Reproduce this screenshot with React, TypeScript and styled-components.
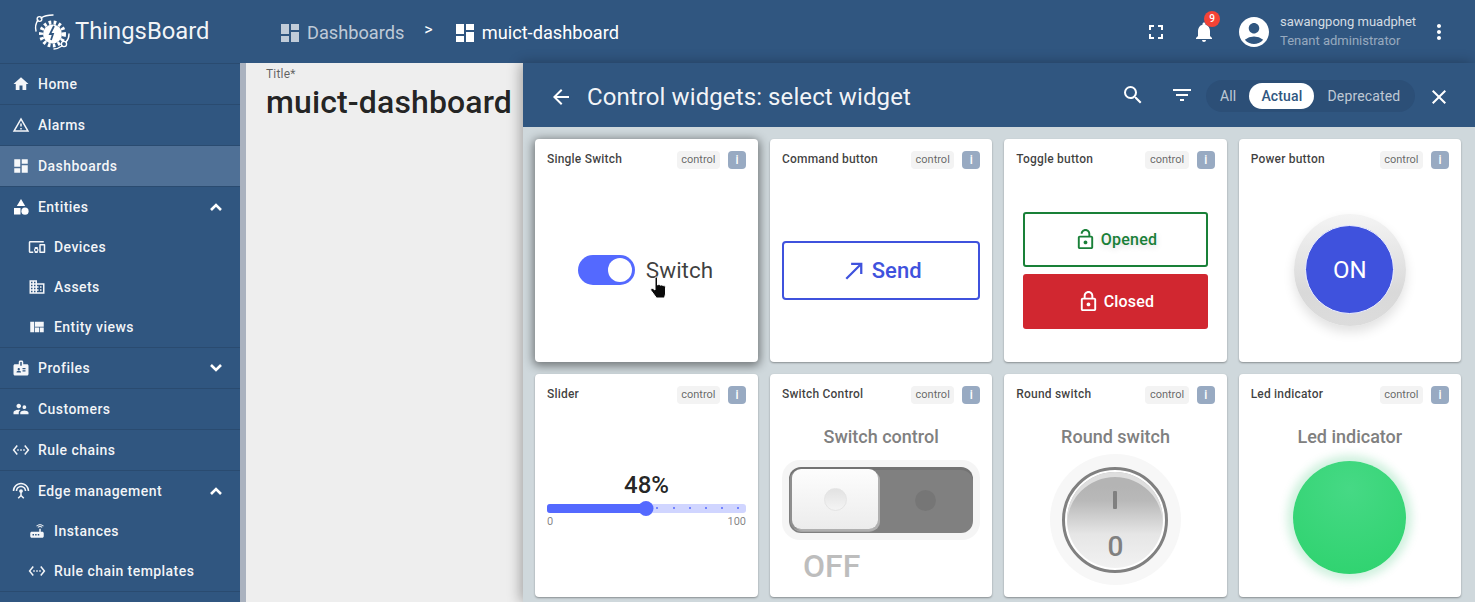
import React from "react";
import styled, { createGlobalStyle } from "styled-components";
import {
  MdHome, MdOutlineWarningAmber, MdDashboard, MdOutlineDevicesOther,
  MdOutlineDomain, MdViewQuilt, MdBadge, MdSupervisorAccount, MdSettingsEthernet, MdSettingsInputAntenna,
  MdRouter, MdFullscreen, MdNotifications, MdAccountCircle, MdMoreVert, MdSearch, MdFilterList, MdClose,
  MdArrowBack, MdNorthEast, MdOutlineLockOpen, MdOutlineLock,
} from "react-icons/md";

const Global = createGlobalStyle`
  html, body { margin: 0; padding: 0; height: 602px; overflow: hidden; }
  body { font-family: Roboto, "Liberation Sans", sans-serif; }
  * { box-sizing: border-box; }
`;

const Page = styled.div`display: flex; width: 1475px; height: 602px; overflow: hidden; background: #305680;`;
const Sidebar = styled.aside`width: 240px; flex: none; background: #305680; color: #fff; display: flex; flex-direction: column; overflow: hidden;`;
const Brand = styled.div`
  height: 64px; flex: none; display: flex; align-items: center; padding-left: 33px; gap: 2px;
  border-bottom: 1px solid rgba(0,0,0,.12);
`;
const BrandName = styled.span`font-size: 23.8px; font-weight: 400; color: rgba(255,255,255,.95); margin-top: -1px;`;
const Nav = styled.nav`display: flex; flex-direction: column;`;
const NavItem = styled.div<{ $active?: boolean; $sub?: boolean }>`
  height: 40px; flex: none; display: flex; align-items: center;
  padding-left: ${p => (p.$sub ? "28px" : "12px")};
  background: ${p => (p.$active ? "#4f7096" : "transparent")};
  font-size: 14px; font-weight: 500; letter-spacing: .45px; color: rgba(255,255,255,.95);
  svg { flex: none; }
`;
const NavGroup = styled.div`display: flex; flex-direction: column; border-bottom: 1px solid rgba(0,0,0,.12);`;
const NavIconBox = styled.span`width: 18px; height: 18px; margin-right: 8px; display: flex; align-items: center; justify-content: center; font-size: 18px;`;
const NavLabel = styled.span`flex: 1;`;
const Chevron = styled.svg<{ $up?: boolean }>`
  width: 14px; height: 10px; margin-right: 17px;
  transform: ${p => (p.$up ? "none" : "rotate(180deg)")};
`;

const Column = styled.div`flex: 1; min-width: 0; display: flex; flex-direction: column;`;
const Topbar = styled.header`height: 63px; flex: none; background: #305680; color: #fff; display: flex; align-items: center; padding-left: 38px;`;
const Crumb = styled.div<{ $dim?: boolean }>`
  display: flex; align-items: center; gap: 5px; font-size: 18.2px; height: 24px; margin-top: 2px;
  color: ${p => (p.$dim ? "rgba(255,255,255,.7)" : "#fff")};
`;
const Separator = styled.span`font-size: 16px; margin: -4px 20px 0 20px; color: #fff;`;
const Spacer = styled.div`flex: 1;`;
const TopIcon = styled.span<{ $gap?: number; $end?: number; $size?: number }>`
  width: ${p => p.$size ?? 24}px; height: 24px; font-size: ${p => p.$size ?? 24}px;
  margin-left: ${p => p.$gap ?? 0}px; margin-right: ${p => p.$end ?? 0}px;
  display: flex; align-items: center; justify-content: center; color: #fff; position: relative;
`;
const Badge = styled.span`
  position: absolute; top: -9px; left: 12px; width: 16px; height: 16px; border-radius: 50%; background: #f44336;
  color: #fff; font-size: 10px; font-weight: 500; display: flex; align-items: center; justify-content: center;
`;
const User = styled.div`display: flex; flex-direction: column; gap: 3px; font-size: 13px; line-height: 16px; margin: 0 12px 0 8px; width: 135px;`;
const UserName = styled.span`color: rgba(255,255,255,.8); white-space: nowrap;`;
const UserRole = styled.span`color: rgba(255,255,255,.5); white-space: nowrap;`;

const Content = styled.div`flex: 1; display: flex; min-height: 0;`;
const Strip = styled.div`width: 6px; flex: none; background: #aab2bf;`;
const TitlePanel = styled.div`width: 277px; flex: none; background: #eeeeee; padding: 4px 0 0 20px;`;
const TitleLabel = styled.div`font-size: 12px; line-height: 14px; color: rgba(0,0,0,.6); letter-spacing: .2px;`;
const TitleValue = styled.div`font-size: 32px; line-height: 36px; margin-top: 3px; font-weight: 500; letter-spacing: .13px; color: rgba(0,0,0,.87); white-space: nowrap;`;

const Drawer = styled.section`flex: 1; min-width: 0; display: flex; flex-direction: column; background: #cfd8dc; box-shadow: -3px 0 12px rgba(0,0,0,.3); position: relative;`;
const DrawerHead = styled.div`height: 64px; flex: none; background: #305680; color: #fff; display: flex; align-items: center; padding: 4px 24px 0 26px;`;
const HeadIcon = styled.span<{ $lift?: boolean; $end?: number }>`
  width: 24px; height: 24px; font-size: 24px; display: flex; align-items: center; justify-content: center; color: #fff;
  margin-top: ${p => (p.$lift ? "-4px" : "0")}; margin-right: ${p => p.$end ?? 0}px;
`;
const DrawerTitle = styled.h2`flex: 1; margin: 0 0 0 14px; font-size: 24px; font-weight: 400; letter-spacing: .1px; color: rgba(255,255,255,.95); white-space: nowrap;`;
const Pill = styled.div`height: 32px; margin: -3px 12px 0 12px; width: 209px; border-radius: 16px; background: #2c4f77; display: flex; align-items: center; padding: 0 3px 0 14px; font-size: 14px; letter-spacing: .15px;`;
const PillOption = styled.span<{ $on?: boolean }>`
  height: 26px; display: flex; align-items: center; border-radius: 13px; white-space: nowrap;
  padding: ${p => (p.$on ? "0 12px" : "0")};
  margin: ${p => (p.$on ? "0 13px" : "0")};
  background: ${p => (p.$on ? "#fff" : "transparent")};
  color: ${p => (p.$on ? "#305680" : "rgba(255,255,255,.7)")};
  font-weight: ${p => (p.$on ? 500 : 400)};
`;

const Grid = styled.div`display: grid; grid-template-columns: repeat(4, 1fr); gap: 12px; padding: 12px 14px 12px 12px; grid-auto-rows: 223px;`;
const Card = styled.article<{ $hover?: boolean }>`
  background: #fff; border-radius: 4px; padding: 12px; display: flex; flex-direction: column;
  box-shadow: ${p => (p.$hover ? "0 2px 10px 2px rgba(0,0,0,.45)" : "0 1px 2px rgba(0,0,0,.35)")};
`;
const CardHead = styled.div`height: 18px; flex: none; display: flex; align-items: flex-start;`;
const CardName = styled.span`flex: 1; font-size: 12px; line-height: 15px; margin-top: 1px; font-weight: 500; letter-spacing: .2px; color: rgba(0,0,0,.76); white-space: nowrap;`;
const Chip = styled.span`height: 18px; padding: 0 4.5px 1px; border-radius: 4px; background: #f3f3f3; font-size: 11px; line-height: 16px; color: rgba(0,0,0,.6); display: flex; align-items: center; margin-right: 8px;`;
const InfoChip = styled.span`width: 18px; height: 18px; border-radius: 4px; background: #98aac2; color: #fff; font-size: 12px; font-weight: 500; display: flex; align-items: center; justify-content: center;`;
const Body = styled.div<{ $start?: boolean }>`
  flex: 1; min-height: 0; display: flex; flex-direction: column; align-items: center;
  justify-content: ${p => (p.$start ? "flex-start" : "center")};
  padding-top: ${p => (p.$start ? "22px" : "8px")};
  margin-bottom: -12px;
`;
const WidgetTitle = styled.div`font-size: 18px; line-height: 21px; font-weight: 500; color: #808080; white-space: nowrap; text-align: center;`;

const SwitchRow = styled.div`display: flex; align-items: center; gap: 11px; position: relative; margin-right: 2px;`;
const Track = styled.span`width: 57px; height: 30px; border-radius: 15px; background: #5469ff; display: flex; align-items: center; justify-content: flex-end; padding-right: 3px;`;
const Thumb = styled.span`width: 24px; height: 24px; border-radius: 50%; background: #fff;`;
const SwitchText = styled.span`font-size: 22.5px; color: rgba(0,0,0,.76);`;
const Hand = styled.svg`position: absolute; left: 71px; top: 21px;`;

const SendButton = styled.div`
  width: 198px; height: 59px; border: 2px solid #3f52dd; border-radius: 4px; color: #3f52dd;
  display: flex; align-items: center; justify-content: center; gap: 4px; font-size: 22px; font-weight: 500; margin-top: 1px;
`;
const ToggleStack = styled.div`display: flex; flex-direction: column; gap: 7px; margin-top: 1px;`;
const ToggleBtn = styled.div<{ $closed?: boolean }>`
  width: 185px; height: 55px; border-radius: 3px; display: flex; align-items: center; justify-content: center; gap: 4px;
  font-size: 16px; font-weight: 500; letter-spacing: .2px;
  border: ${p => (p.$closed ? "0" : "2px solid #198038")};
  background: ${p => (p.$closed ? "#d12730" : "#fff")};
  color: ${p => (p.$closed ? "#fff" : "#198038")};
  text-shadow: ${p => (p.$closed ? "none" : "0 2px 6px rgba(0,0,0,.15)")};
`;
const PowerOuter = styled.div`
  width: 112px; height: 112px; border-radius: 50%; display: flex; align-items: center; justify-content: center;
  background: linear-gradient(180deg, #f4f4f4 0%, #d9d9d9 70%, #dcdcdc 100%);
  box-shadow: 0 6px 12px rgba(0,0,0,.12);
`;
const PowerInner = styled.div`
  width: 89px; height: 89px; border-radius: 50%; background: #3f52dd; border: 1px solid #eef0ff; color: #fff;
  font-size: 24px; display: flex; align-items: center; justify-content: center;
`;

const SliderWrap = styled.div`width: 199px; display: flex; flex-direction: column; align-items: center; margin-top: 45px;`;
const SliderValue = styled.div`font-size: 24px; line-height: 28px; font-weight: 500; color: rgba(0,0,0,.87);`;
const SliderTrack = styled.div`
  width: 100%; height: 9px; margin-top: 5px; border-radius: 3px; background: #d0d5ff; position: relative;
`;
const SliderFill = styled.div`height: 100%; border-radius: 3px; background: #5469ff;`;
const SliderKnob = styled.span`position: absolute; top: -3px; width: 15px; height: 15px; border-radius: 50%; background: #5469ff; transform: translateX(-50%);`;
const SliderDot = styled.span`position: absolute; top: 3px; width: 2px; height: 2px; border-radius: 50%; background: #5469ff;`;
const SliderLabels = styled.div`width: 100%; display: flex; justify-content: space-between; font-size: 11px; line-height: 13px; margin-top: 2px; color: rgba(0,0,0,.5);`;

const SwitchBox = styled.div`width: 198px; height: 80px; margin-top: 13px; padding: 7px; background: #f5f5f5; border-radius: 18px;`;
const SwitchInner = styled.div`
  height: 66px; border-radius: 12px; background: #808080; display: flex; align-items: stretch;
  box-shadow: inset 0 3px 0 rgba(0,0,0,.1);
`;
const SwitchKnob = styled.div`
  width: 86px; border-radius: 9px; background: linear-gradient(180deg, #fdfdfd, #ececec);
  box-shadow: 2px 2px 0 #b0b0b0, -2px 1px 0 #8f8f8f, 0 3px 0 #a4a4a4; margin: 2px 0 4px 3px; display: flex; align-items: center; justify-content: center;
`;
const KnobDot = styled.span`width: 23px; height: 23px; border-radius: 50%; background: linear-gradient(180deg, #e2e2e2, #f4f4f4); border: 1px solid #e4e4e4;`;
const SwitchSide = styled.div`flex: 1; display: flex; align-items: center; justify-content: center;`;
const SideDot = styled.span`width: 21px; height: 21px; border-radius: 50%; background: #767676;`;
const OffLabel = styled.div`align-self: flex-start; margin: 8px 0 0 21px; font-size: 32px; line-height: 36px; font-weight: 500; color: #bdbdbd;`;

const RoundOuter = styled.div`width: 131px; height: 131px; margin-top: 7px; border-radius: 50%; background: #f7f7f7; display: flex; align-items: center; justify-content: center;`;
const RoundRing = styled.div`width: 106px; height: 106px; border-radius: 50%; border: 3px solid #808080; background: #fff; padding: 2px; display: flex;`;
const RoundFace = styled.div`
  flex: 1; border-radius: 50%; background: linear-gradient(180deg, #b4b4b4 15%, #b9b9b9 30%, #e6e6e6 65%, #f2f2f2 100%);
  box-shadow: inset 0 5px 0 #dedede;
  display: flex; flex-direction: column; align-items: center; color: #808080; font-weight: 500;
`;
const RoundBar = styled.span`width: 4px; height: 18px; margin-top: 19px; border-radius: 1px; background: #808080;`;
const RoundZero = styled.span`font-size: 28px; line-height: 30px; margin-top: 23px;`;

const Led = styled.div`
  width: 113px; height: 113px; margin-top: 14px; border-radius: 50%;
  background: radial-gradient(ellipse 90% 90% at 50% 25%, #46d985, #2fd36f 90%);
  box-shadow: 0 0 8px 6px rgba(47,190,110,.22);
`;

const Logo = () => (
  <svg width="40" height="42" viewBox="32 10 40 42" fill="none">
    <circle cx="51.5" cy="33" r="9.5" fill="#fff" />
    <circle cx="51.5" cy="33" r="11.5" stroke="#fff" strokeWidth="4" strokeDasharray="2.6 2.4" />
    <path d="M53 25l-4 8h3l-2 6" stroke="#305680" strokeWidth="1.8" />
    <path d="M35 30c-1-4 0-8 2-11M40 17c3-2 7-3 12-3" stroke="#fff" strokeWidth="1.4" strokeLinecap="round" />
    <circle cx="38.5" cy="18" r="2.4" stroke="#fff" strokeWidth="1.3" />
    <path d="M53 48c3 0 5-1 8-3M65 41c2-2 3-5 3-8" stroke="#fff" strokeWidth="1.4" strokeLinecap="round" />
    <circle cx="63" cy="43" r="2.6" stroke="#fff" strokeWidth="1.3" />
  </svg>
);

const ShapesIcon = () => (
  <svg width="18" height="18" viewBox="0 0 18 18" fill="#fff">
    <path d="M9 1l4.2 7H4.800z" />
    <rect x="2" y="10" width="6.500" height="6.500" />
    <circle cx="13" cy="13.200" r="3.600" />
  </svg>
);

const HandCursor = () => (
  <Hand width="20" height="24" viewBox="0 0 20 24">
    <path
      d="M6 2c0-1.400 2.500-1.400 2.500 0v7c1-.6 2.200-.6 2.800.2 1-.5 2.200-.3 2.700.5 1-.3 2.500.2 2.500 1.500V18l-1 4H7.500L2 14.500c-.9-1.400.9-2.800 2.200-1.800L6 14V2z"
      fill="#0a0a0a" stroke="#fff" strokeWidth="1"
    />
  </Hand>
);

const Nav1 = ({ icon, label, chev, active, sub }: { icon: React.ReactNode; label: string; chev?: "up" | "down"; active?: boolean; sub?: boolean }) => (
  <NavItem $active={active} $sub={sub}>
    <NavIconBox>{icon}</NavIconBox>
    <NavLabel>{label}</NavLabel>
    {chev && (
      <Chevron $up={chev === "up"} viewBox="0 0 14 10" fill="none">
        <path d="M2 8l5-5 5 5" stroke="#fff" strokeWidth="2.6" />
      </Chevron>
    )}
  </NavItem>
);

const WidgetCard = ({ name, hover, start, children }: { name: string; hover?: boolean; start?: boolean; children: React.ReactNode }) => (
  <Card $hover={hover}>
    <CardHead>
      <CardName>{name}</CardName>
      <Chip>control</Chip>
      <InfoChip>i</InfoChip>
    </CardHead>
    <Body $start={start}>{children}</Body>
  </Card>
);

const dots = [55, 63.2, 71.3, 79.4, 87.4, 95.5];

export default function App() {
  return (
    <Page>
      <Global />
      <Sidebar>
        <Brand>
          <Logo />
          <BrandName>ThingsBoard</BrandName>
        </Brand>
        <Nav>
          <NavGroup><Nav1 icon={<MdHome />} label="Home" /></NavGroup>
          <NavGroup><Nav1 icon={<MdOutlineWarningAmber />} label="Alarms" /></NavGroup>
          <NavGroup><Nav1 icon={<MdDashboard />} label="Dashboards" active /></NavGroup>
          <NavGroup>
            <Nav1 icon={<ShapesIcon />} label="Entities" chev="up" />
            <Nav1 icon={<MdOutlineDevicesOther />} label="Devices" sub />
            <Nav1 icon={<MdOutlineDomain />} label="Assets" sub />
            <Nav1 icon={<MdViewQuilt />} label="Entity views" sub />
          </NavGroup>
          <NavGroup><Nav1 icon={<MdBadge />} label="Profiles" chev="down" /></NavGroup>
          <NavGroup><Nav1 icon={<MdSupervisorAccount />} label="Customers" /></NavGroup>
          <NavGroup><Nav1 icon={<MdSettingsEthernet />} label="Rule chains" /></NavGroup>
          <NavGroup>
            <Nav1 icon={<MdSettingsInputAntenna />} label="Edge management" chev="up" />
            <Nav1 icon={<MdRouter />} label="Instances" sub />
            <Nav1 icon={<MdSettingsEthernet />} label="Rule chain templates" sub />
          </NavGroup>
        </Nav>
      </Sidebar>
      <Column>
        <Topbar>
          <Crumb $dim><MdDashboard size={24} />Dashboards</Crumb>
          <Separator>&gt;</Separator>
          <Crumb><MdDashboard size={24} />muict-dashboard</Crumb>
          <Spacer />
          <TopIcon><MdFullscreen /></TopIcon>
          <TopIcon $gap={24}><MdNotifications /><Badge>9</Badge></TopIcon>
          <TopIcon $gap={20} $size={36}><MdAccountCircle /></TopIcon>
          <User><UserName>sawangpong muadphet</UserName><UserRole>Tenant administrator</UserRole></User>
          <TopIcon $end={24}><MdMoreVert /></TopIcon>
        </Topbar>
        <Content>
          <Strip />
          <TitlePanel>
            <TitleLabel>Title*</TitleLabel>
            <TitleValue>muict-dashboard</TitleValue>
          </TitlePanel>
          <Drawer>
            <DrawerHead>
              <HeadIcon><MdArrowBack /></HeadIcon>
              <DrawerTitle>Control widgets: select widget</DrawerTitle>
              <HeadIcon $lift $end={25}><MdSearch /></HeadIcon>
              <HeadIcon $lift><MdFilterList /></HeadIcon>
              <Pill>
                <PillOption>All</PillOption>
                <PillOption $on>Actual</PillOption>
                <PillOption>Deprecated</PillOption>
              </Pill>
              <HeadIcon><MdClose /></HeadIcon>
            </DrawerHead>
            <Grid>
              <WidgetCard name="Single Switch" hover>
                <SwitchRow>
                  <Track><Thumb /></Track>
                  <SwitchText>Switch</SwitchText>
                  <HandCursor />
                </SwitchRow>
              </WidgetCard>
              <WidgetCard name="Command button">
                <SendButton><MdNorthEast size={27} />Send</SendButton>
              </WidgetCard>
              <WidgetCard name="Toggle button">
                <ToggleStack>
                  <ToggleBtn><MdOutlineLockOpen size={23} />Opened</ToggleBtn>
                  <ToggleBtn $closed><MdOutlineLock size={23} />Closed</ToggleBtn>
                </ToggleStack>
              </WidgetCard>
              <WidgetCard name="Power button">
                <PowerOuter><PowerInner>ON</PowerInner></PowerOuter>
              </WidgetCard>
              <WidgetCard name="Slider" start>
                <SliderWrap>
                  <SliderValue>48%</SliderValue>
                  <SliderTrack>
                    <SliderFill style={{ width: "49.7%" }} />
                    {dots.map(d => <SliderDot key={d} style={{ left: `${d}%` }} />)}
                    <SliderKnob style={{ left: "49.7%" }} />
                  </SliderTrack>
                  <SliderLabels><span>0</span><span>100</span></SliderLabels>
                </SliderWrap>
              </WidgetCard>
              <WidgetCard name="Switch Control" start>
                <WidgetTitle>Switch control</WidgetTitle>
                <SwitchBox>
                  <SwitchInner>
                    <SwitchKnob><KnobDot /></SwitchKnob>
                    <SwitchSide><SideDot /></SwitchSide>
                  </SwitchInner>
                </SwitchBox>
                <OffLabel>OFF</OffLabel>
              </WidgetCard>
              <WidgetCard name="Round switch" start>
                <WidgetTitle>Round switch</WidgetTitle>
                <RoundOuter>
                  <RoundRing>
                    <RoundFace><RoundBar /><RoundZero>0</RoundZero></RoundFace>
                  </RoundRing>
                </RoundOuter>
              </WidgetCard>
              <WidgetCard name="Led indicator" start>
                <WidgetTitle>Led indicator</WidgetTitle>
                <Led />
              </WidgetCard>
            </Grid>
          </Drawer>
        </Content>
      </Column>
    </Page>
  );
}
